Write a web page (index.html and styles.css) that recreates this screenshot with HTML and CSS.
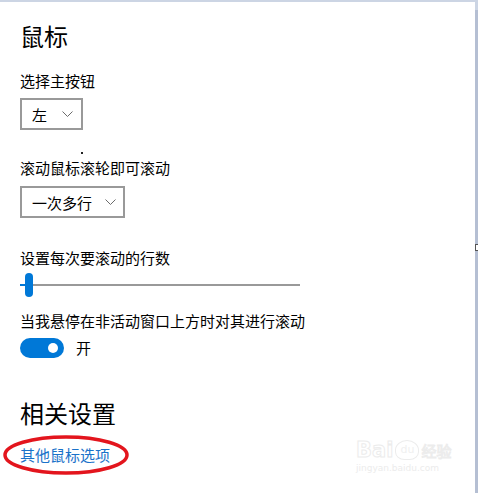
FILE: index.html
```html
<!DOCTYPE html>
<html lang="zh-CN">

<head>
    <meta charset="UTF-8">
    <meta name="viewport" content="width=device-width, initial-scale=1.0">
    <title>鼠标</title>
    <link rel="stylesheet" href="styles.css">
</head>

<body>
    <div class="window">
        <main class="panel">
            <h1 class="title">鼠标</h1>

            <div class="label">选择主按钮</div>
            <div class="select select-short">
                <span>左</span>
                <svg class="chevron" width="11" height="6" viewBox="0 0 11 6">
                    <path d="M0.5 0.5 L5.5 5.5 L10.5 0.5" fill="none" stroke="#6b6b6b" stroke-width="1"/>
                </svg>
            </div>

            <span class="stray-dot"></span>

            <div class="label label-gap">滚动鼠标滚轮即可滚动</div>
            <div class="select select-long">
                <span>一次多行</span>
                <svg class="chevron" width="11" height="6" viewBox="0 0 11 6">
                    <path d="M0.5 0.5 L5.5 5.5 L10.5 0.5" fill="none" stroke="#6b6b6b" stroke-width="1"/>
                </svg>
            </div>

            <div class="label label-gap-lg">设置每次要滚动的行数</div>
            <div class="slider">
                <div class="slider-fill"></div>
                <div class="slider-thumb"></div>
                <div class="slider-track"></div>
            </div>

            <div class="label label-gap-sm">当我悬停在非活动窗口上方时对其进行滚动</div>
            <div class="toggle-row">
                <div class="toggle"><span class="knob"></span></div>
                <span>开</span>
            </div>

            <h2 class="subtitle">相关设置</h2>
            <div class="link-wrap">
                <a class="link" href="#">其他鼠标选项</a>
                <svg class="circle-mark" width="128" height="42" viewBox="0 0 128 42">
                    <ellipse cx="64" cy="21" rx="61" ry="18" fill="none" stroke="#e3151d" stroke-width="3.5"/>
                </svg>
            </div>

            <div class="watermark">
                <div class="wm-top">
                    <span class="wm-bai">Bai</span>
                    <span class="wm-du">du</span>
                    <span class="wm-jy">经验</span>
                </div>
                <div class="wm-url">jingyan.baidu.com</div>
            </div>
        </main>
        <div class="edge"><span class="edge-mark"></span></div>
    </div>
</body>

</html>
```

FILE: styles.css
```css
body {
    margin: 0;
    background: #fff;
    font-family: "Noto Sans CJK SC", "Microsoft YaHei", sans-serif;
    color: #000;
}

.window {
    display: flex;
    width: 478px;
    height: 493px;
    overflow: hidden;
}

.panel {
    position: relative;
    flex: 1;
    border-top: 2px solid #ccd5e4;
    padding: 18px 0 0 20px;
    display: flex;
    flex-direction: column;
    align-items: flex-start;
}

.edge {
    position: relative;
    width: 3px;
    background: linear-gradient(#ccd5e4 0, #ccd5e4 10px, #b5bfd3 10px);
}

.edge-mark {
    position: absolute;
    top: 244px;
    left: 0;
    width: 2px;
    height: 5px;
    border: 1px solid #555;
    border-right: none;
    background: #fff;
}

.title {
    margin: 0;
    font-size: 24px;
    font-weight: normal;
    line-height: 32px;
}

.subtitle {
    margin: 39px 0 0;
    font-size: 24px;
    font-weight: normal;
    line-height: 32px;
}

.label {
    margin-top: 19px;
    font-size: 15px;
    line-height: 20px;
}

.label-gap {
    margin-top: 28px;
}

.label-gap-lg {
    margin-top: 30px;
}

.label-gap-sm {
    margin-top: 14px;
}

.select {
    margin-top: 7px;
    display: flex;
    align-items: center;
    height: 28px;
    border: 2px solid #999;
    padding: 0 8px 0 10px;
    font-size: 15px;
}

.select-short .chevron {
    margin-left: 15px;
}

.select-long {
    margin-top: 8px;
    padding-right: 7px;
}

.select-long .chevron {
    margin-left: 13px;
}

.stray-dot {
    position: absolute;
    top: 150px;
    left: 81px;
    width: 2px;
    height: 2px;
    background: #222;
}

.slider {
    position: relative;
    margin-top: 5px;
    width: 280px;
    height: 24px;
}

.slider-track {
    position: absolute;
    top: 11px;
    left: 5px;
    right: 0;
    height: 2px;
    background: #999;
}

.slider-fill {
    position: absolute;
    top: 11px;
    left: 0;
    width: 6px;
    height: 2px;
    background: #0078d7;
}

.slider-thumb {
    position: absolute;
    top: 0;
    left: 5px;
    width: 8px;
    height: 24px;
    border-radius: 4px;
    background: #0078d7;
    z-index: 1;
}

.toggle-row {
    margin-top: 7px;
    display: flex;
    align-items: center;
    gap: 12px;
    font-size: 15px;
    line-height: 20px;
}

.toggle {
    display: flex;
    align-items: center;
    justify-content: flex-end;
    width: 44px;
    height: 20px;
    border-radius: 10px;
    background: #0078d7;
    padding-right: 6px;
    box-sizing: border-box;
}

.knob {
    width: 10px;
    height: 10px;
    border-radius: 50%;
    background: #fff;
}

.link-wrap {
    position: relative;
    margin-top: 16px;
}

.link {
    display: block;
    font-size: 15px;
    line-height: 20px;
    color: #1a72c9;
    text-decoration: none;
}

.circle-mark {
    position: absolute;
    left: -18px;
    top: -11px;
}

.watermark {
    position: absolute;
    left: 356px;
    top: 436px;
    color: #f0f0f0;
    font-family: "DejaVu Sans", sans-serif;
}

.wm-top {
    display: flex;
    align-items: flex-end;
    gap: 2px;
}

.wm-bai {
    font-size: 21px;
    line-height: 24px;
    font-weight: bold;
    color: #fff;
    -webkit-text-stroke: 1px #ececec;
}

.wm-du {
    font-size: 11px;
    line-height: 18px;
    width: 22px;
    height: 18px;
    text-align: center;
    border: 1px solid #ececec;
    border-radius: 50% 50% 40% 40%;
    margin-bottom: 2px;
}

.wm-jy {
    font-family: "Noto Sans CJK SC", sans-serif;
    font-size: 15px;
    line-height: 22px;
    color: #fff;
    -webkit-text-stroke: 1px #ececec;
}

.wm-url {
    font-size: 9px;
    line-height: 12px;
    color: #ececec;
}
```
